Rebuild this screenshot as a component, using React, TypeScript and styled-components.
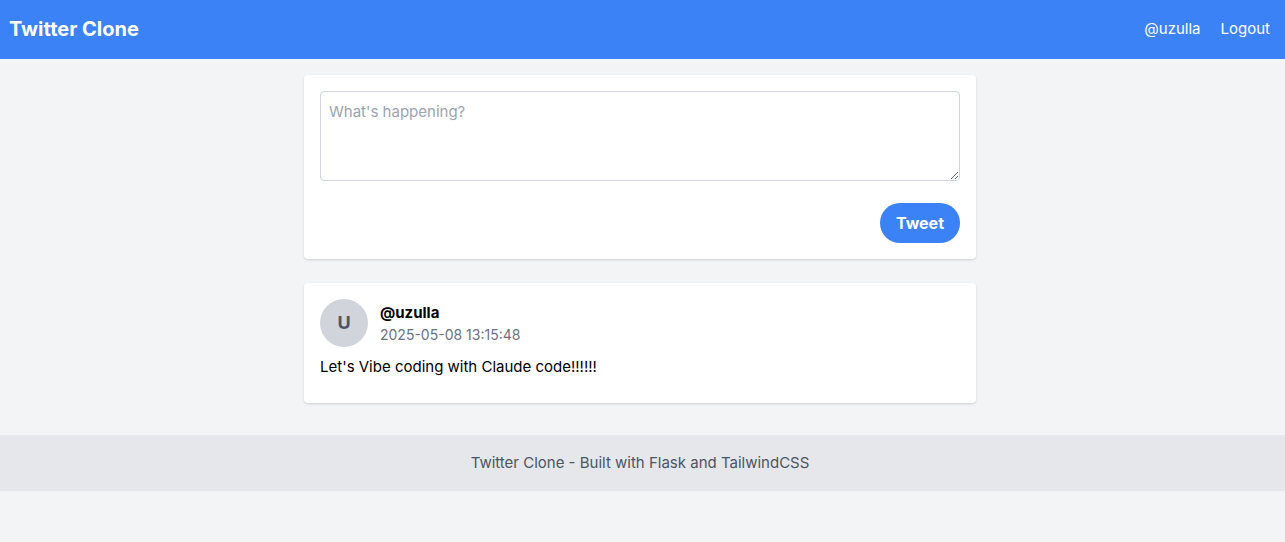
import React from "react";
import styled, { createGlobalStyle } from "styled-components";

const GlobalStyle = createGlobalStyle`
  *, *::before, *::after { box-sizing: border-box; }
  body {
    margin: 0;
    background: #f3f4f6;
    color: #000;
    font: 400 15px/24px Inter, "Liberation Sans", sans-serif;
  }
`;

const NavBar = styled.nav`
  display: flex;
  align-items: center;
  justify-content: space-between;
  padding: 15px 15px 16px 9px;
  background: #3b82f6;
`;

const Brand = styled.a`
  color: #fff;
  font-size: 20px;
  font-weight: 700;
  line-height: 28px;
  text-decoration: none;
`;

const NavLinks = styled.div`
  display: flex;
  gap: 20px;
`;

const NavLink = styled.a`
  color: #fff;
  text-decoration: none;
`;

const Page = styled.div`
  padding-right: 5px;
`;

const Main = styled.main`
  display: flex;
  flex-direction: column;
  gap: 24px;
  max-width: 672px;
  margin: 16px auto 32px;
`;

const Card = styled.section`
  padding: 16px;
  border-radius: 4px;
  background: #fff;
  box-shadow: 0 1px 3px rgba(0, 0, 0, 0.1), 0 1px 2px rgba(0, 0, 0, 0.06);
`;

const Form = styled.form`
  display: flex;
  flex-direction: column;
  gap: 22px;
`;

const TweetBox = styled.textarea`
  display: block;
  width: 100%;
  height: 90px;
  padding: 8px;
  border: 1px solid #d1d5db;
  border-radius: 4px;
  background: #fff;
  font: inherit;
  resize: vertical;
  &::placeholder { color: #9ca3af; }
`;

const TweetButton = styled.button`
  align-self: flex-end;
  padding: 8px 16px;
  border: 0;
  border-radius: 20px;
  background: #3b82f6;
  color: #fff;
  font: inherit;
  font-size: 16px;
  font-weight: 700;
`;

const Author = styled.header`
  display: flex;
  align-items: center;
  gap: 12px;
  margin-bottom: 8px;
`;

const Avatar = styled.div`
  display: grid;
  place-items: center;
  width: 48px;
  height: 48px;
  border-radius: 50%;
  background: #d1d5db;
  color: #4b5563;
  font-size: 18px;
  font-weight: 700;
`;

const Handle = styled.div`
  font-weight: 700;
`;

const Timestamp = styled.time`
  display: block;
  color: #6b7280;
  font-size: 14px;
  line-height: 20px;
`;

const TweetText = styled.p`
  margin: 0 0 8px;
`;

const Footer = styled.footer`
  padding: 16px 5px 16px 0;
  background: #e5e7eb;
  color: #4b5563;
  text-align: center;
`;

export default function App() {
  return (
    <>
      <GlobalStyle />
      <NavBar>
        <Brand href="#">Twitter Clone</Brand>
        <NavLinks>
          <NavLink href="#profile">@uzulla</NavLink>
          <NavLink href="#logout">Logout</NavLink>
        </NavLinks>
      </NavBar>
      <Page>
        <Main>
          <Card>
            <Form onSubmit={(e: React.FormEvent) => e.preventDefault()}>
              <TweetBox aria-label="What's happening?" placeholder="What's happening?" />
              <TweetButton type="submit">Tweet</TweetButton>
            </Form>
          </Card>
          <Card as="article">
            <Author>
              <Avatar>U</Avatar>
              <div>
                <Handle>@uzulla</Handle>
                <Timestamp dateTime="2025-05-08T13:15:48">2025-05-08 13:15:48</Timestamp>
              </div>
            </Author>
            <TweetText>Let's Vibe coding with Claude code!!!!!!</TweetText>
          </Card>
        </Main>
      </Page>
      <Footer>Twitter Clone - Built with Flask and TailwindCSS</Footer>
    </>
  );
}
